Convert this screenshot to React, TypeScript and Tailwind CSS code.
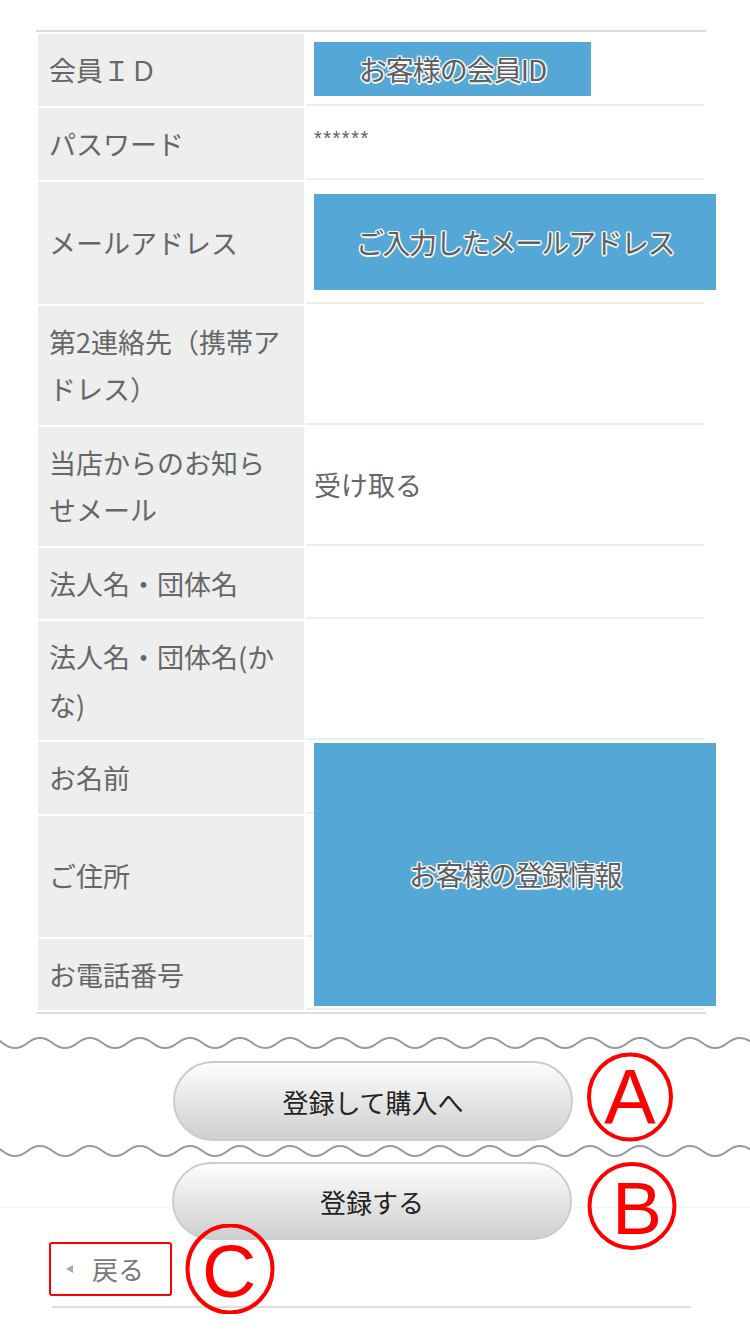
import React from "react";

const label = "bg-[#eeeeee] pl-[11px] pr-[19px] py-3 align-middle text-[27px] leading-[47.5px] text-[#666666]";
const value = "border-b-2 border-[#eeeeee] pl-2 py-3 align-middle text-[27px] leading-[45.5px] text-[#666666]";
const maskText =
  "text-[28px] text-[#5f5f5f] tracking-[-1.5px] whitespace-nowrap [text-shadow:0_0_2px_#fff,1.5px_0_0_#eef7fc,-1.5px_0_0_#eef7fc,0_1.5px_0_#eef7fc,0_-1.5px_0_#eef7fc,1px_1px_0_#eef7fc,-1px_-1px_0_#eef7fc,1px_-1px_0_#eef7fc,-1px_1px_0_#eef7fc]";

function Wave() {
  // quadratic wave, period 50px
  let d = "M-22.5,8 q12.5,-10 25,0";
  for (let i = 0; i < 34; i++) d += " t25,0";
  return (
    <svg width="750" height="16" viewBox="0 0 750 16" className="block">
      <path d={d} fill="none" stroke="#9a9a9a" strokeWidth="2" />
    </svg>
  );
}

function Mark({ letter, rx, ry, tx, ty, size }: { letter: string; rx: number; ry: number; tx: number; ty: number; size: number }) {
  return (
    <svg width="90" height="90" viewBox="0 0 90 90">
      <ellipse cx="45" cy="45" rx={rx} ry={ry} fill="none" stroke="#ff0000" strokeWidth="4" />
      <text x={tx} y={ty} textAnchor="middle" fontSize={size} fill="#ff0000" fontFamily="'Liberation Sans', Arial, sans-serif">
        {letter}
      </text>
    </svg>
  );
}

function PillButton({ text, h }: { text: string; h: string }) {
  return (
    <button
      className={`w-[400px] ${h} rounded-full border-2 border-[#cccccc] bg-[linear-gradient(to_bottom,#fdfdfd,#cfcfcf)] text-[26px] text-[#222] flex items-center justify-center`}
    >
      {text}
    </button>
  );
}

export default function App() {
  return (
    <div className="w-[750px] min-h-[1334px] bg-white pt-[30px] font-['Noto_Sans_CJK_JP','Noto_Sans',sans-serif]">
      {/* member info table */}
      <div className="ml-[36px] w-[670px] border-y-2 border-[#dddddd]">
        <table className="w-full table-fixed border-separate border-spacing-[2px]">
          <colgroup>
            <col className="w-[266px]" />
            <col />
          </colgroup>
          <tbody>
            <tr>
              <td className={label}>会員ＩＤ</td>
              <td className="border-b-2 border-[#eeeeee] pl-2 py-2 align-middle">
                <div className="w-[277px] h-[54px] bg-[#55a8d5] flex items-center justify-center">
                  <span className={`${maskText} tracking-[-1px]`}>お客様の会員ID</span>
                </div>
              </td>
            </tr>
            <tr>
              <td className={label}>パスワード</td>
              <td className="border-b-2 border-[#eeeeee] pl-2 py-3 align-middle">
                <div className="font-['Liberation_Sans'] text-[20px] leading-[20px] tracking-[1.5px] text-[#5f5f5f] -mt-[10px]">******</div>
              </td>
            </tr>
            <tr>
              <td className={label}>メールアドレス</td>
              <td className="border-b-2 border-[#eeeeee] pl-2 py-3 align-middle">
                <div className="w-[402px] h-[96px] bg-[#55a8d5] flex items-center justify-center">
                  <span className={maskText}>ご入力したメールアドレス</span>
                </div>
              </td>
            </tr>
            <tr>
              <td className={label}>第2連絡先（携帯アドレス）</td>
              <td className={value}></td>
            </tr>
            <tr>
              <td className={label}>当店からのお知らせメール</td>
              <td className={value}>受け取る</td>
            </tr>
            <tr>
              <td className={label}>法人名・団体名</td>
              <td className={value}></td>
            </tr>
            <tr>
              <td className={label}>法人名・団体名(かな)</td>
              <td className={value}></td>
            </tr>
            <tr>
              <td className={label}>お名前</td>
              <td className={`${value} relative`}>
                <div className="absolute left-2 top-[1px] z-10 w-[402px] h-[263px] bg-[#55a8d5] flex items-center justify-center">
                  <span className={maskText}>お客様の登録情報</span>
                </div>
              </td>
            </tr>
            <tr>
              <td className={label}>ご住所</td>
              <td className={value}>
                <div className="h-[95px]" />
              </td>
            </tr>
            <tr>
              <td className={label}>お電話番号</td>
              <td className={value}></td>
            </tr>
          </tbody>
        </table>
      </div>

      <div className="mt-[21px]">
        <Wave />
      </div>

      {/* A */}
      <div className="relative mt-[10px] pl-[173px]">
        <PillButton text="登録して購入へ" h="h-[80px]" />
        <div className="absolute left-[585px] top-[-9px]">
          <Mark letter="A" rx={41} ry={42.5} tx={45} ty={72} size={77} />
        </div>
      </div>

      <div className="mt-[2px]">
        <Wave />
      </div>

      {/* B */}
      <div className="relative mt-[3px] pl-[172px]">
        <div className="absolute left-0 right-0 top-[45px] h-px bg-[#f4f4f4]" />
        <div className="relative">
          <PillButton text="登録する" h="h-[78px]" />
        </div>
        <div className="absolute left-[587px] top-[-1px]">
          <Mark letter="B" rx={42.5} ry={42} tx={50} ty={73} size={75} />
        </div>
      </div>

      {/* C */}
      <div className="relative mt-[2px] pl-[49px]">
        <a className="w-[123px] h-[54px] border-2 border-[#ff0000] rounded-[3px] flex items-center pl-[15px]">
          <svg width="7" height="8" viewBox="0 0 7 8">
            <polygon points="7,0 7,8 0,4" fill="#aaaaaa" />
          </svg>
          <span className="ml-[19px] text-[26px] text-[#777777] leading-none">戻る</span>
        </a>
        <div className="absolute left-[185px] top-[-18px]">
          <Mark letter="C" rx={42.5} ry={43.5} tx={44} ty={73} size={75} />
        </div>
      </div>

      <div className="mt-[10px] ml-[52px] w-[639px] h-[2px] bg-[#dddddd]" />
    </div>
  );
}
